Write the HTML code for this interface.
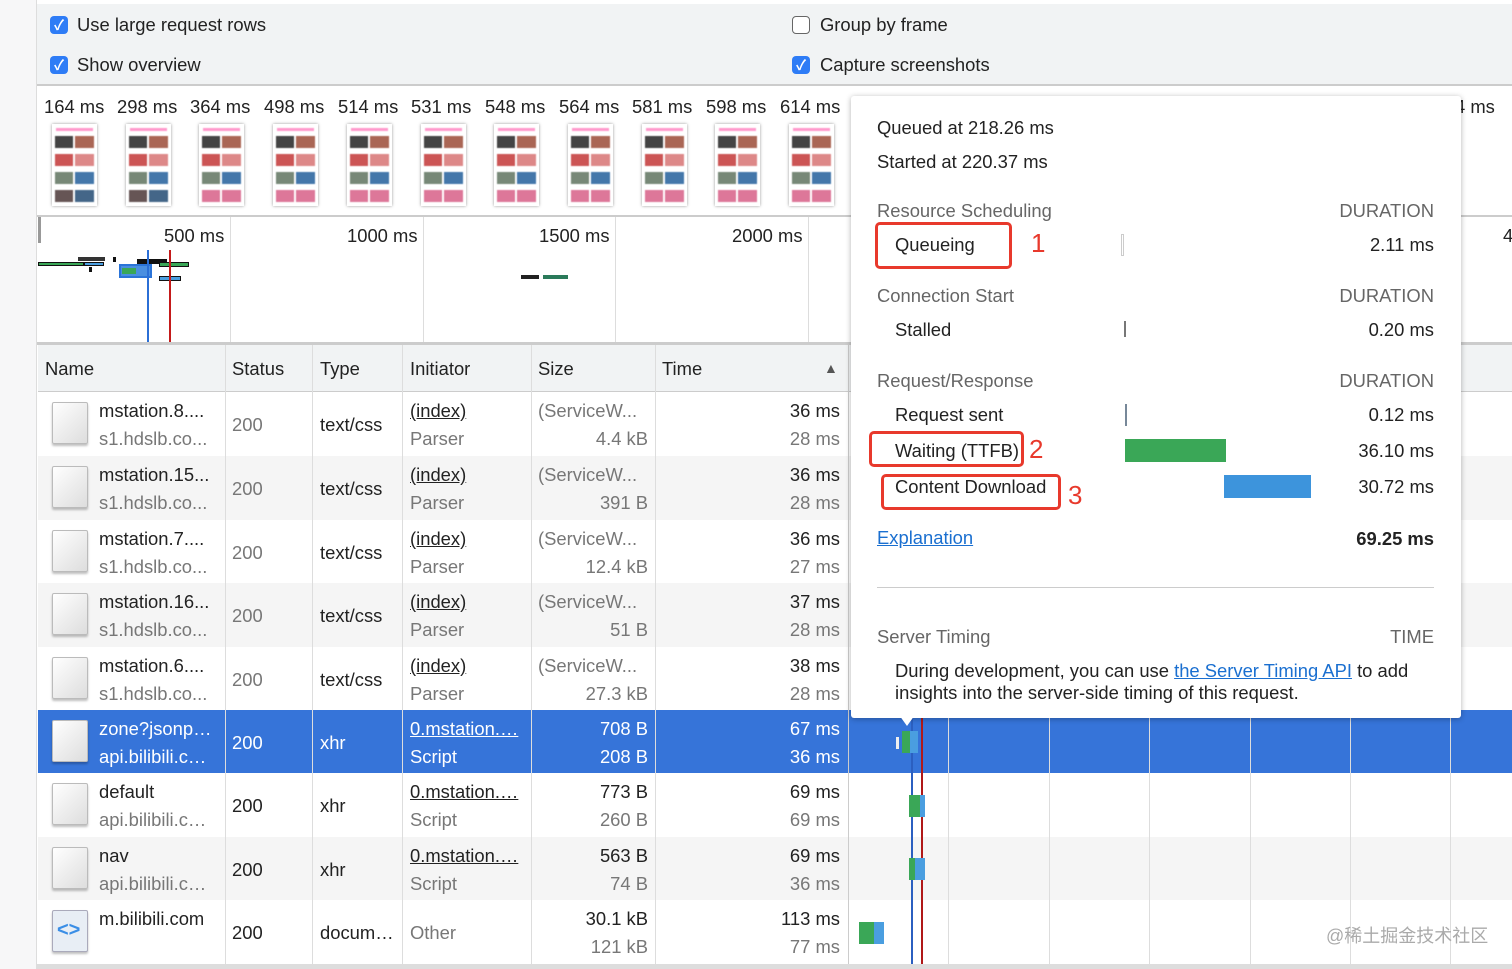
<!DOCTYPE html>
<html><head><meta charset="utf-8"><style>
*{margin:0;padding:0;box-sizing:border-box}
body{width:1512px;height:969px;overflow:hidden;background:#fff;font-family:"Liberation Sans","Noto Sans CJK SC",sans-serif;font-size:18.4px;color:#222;position:relative}
.a{position:absolute;white-space:nowrap}
.cb{position:absolute;width:18px;height:18px;border-radius:4px;background:#2e7cf6;color:#fff;font-size:14px;font-weight:bold;line-height:18px;text-align:center}
.cbo{position:absolute;width:18px;height:18px;border-radius:4px;border:1.5px solid #666;background:#fff}
.th{position:absolute;left:52px;top:124px;width:45px;height:82px;background:#fff;box-shadow:0 0 3px rgba(0,0,0,.4)}
.th i{position:absolute;display:block;filter:blur(.4px)}
.row{position:absolute;left:38px;width:1474px;height:64px}
.ic{position:absolute;left:14px;top:10px;width:36px;height:42px;border:1px solid #bbb;border-radius:2px;background:linear-gradient(135deg,#fff,#ddd);box-shadow:0 2px 2px rgba(0,0,0,.25)}
.u{text-decoration:underline}
.vl{position:absolute;top:392px;height:577px;width:1px;background:#ddd}
.tip{position:absolute;left:851px;top:96px;width:610px;height:622px;background:#fff;box-shadow:0 1px 6px rgba(0,0,0,.3);border-radius:3px}
.sec{color:#666}
.red{position:absolute;border:3px solid #e8392c;border-radius:5px}
.num{position:absolute;color:#e8392c;font-size:26px}
</style></head><body>
<div class="a" style="left:0;top:0;width:37px;height:969px;background:#f7f7f8;border-right:1px solid #ddd"></div>
<div class="a" style="left:37px;top:0;width:1475px;height:86px;background:#f1f3f4;border-top:4px solid #fff;border-bottom:2px solid #ccc"></div>
<div class="cb" style="left:50px;top:16px">✓</div><div class="a" style="left:77px;top:14px">Use large request rows</div>
<div class="cb" style="left:50px;top:56px">✓</div><div class="a" style="left:77px;top:54px">Show overview</div>
<div class="cbo" style="left:792px;top:16px"></div><div class="a" style="left:820px;top:14px">Group by frame</div>
<div class="cb" style="left:792px;top:56px">✓</div><div class="a" style="left:820px;top:54px">Capture screenshots</div>

<div class="a" style="left:44px;top:96px">164 ms</div>
<div class="a" style="left:117px;top:96px">298 ms</div>
<div class="a" style="left:190px;top:96px">364 ms</div>
<div class="a" style="left:264px;top:96px">498 ms</div>
<div class="a" style="left:338px;top:96px">514 ms</div>
<div class="a" style="left:411px;top:96px">531 ms</div>
<div class="a" style="left:485px;top:96px">548 ms</div>
<div class="a" style="left:559px;top:96px">564 ms</div>
<div class="a" style="left:632px;top:96px">581 ms</div>
<div class="a" style="left:706px;top:96px">598 ms</div>
<div class="a" style="left:780px;top:96px">614 ms</div>
<div class="a" style="left:1455px;top:96px">4 ms</div>
<div id="thumbs"></div>
<div class="a" style="left:37px;top:215px;width:1475px;height:2px;background:#ccc"></div>
<div class="a" style="left:38px;top:217px;width:3px;height:26px;background:#999"></div>
<div class="a" style="left:230px;top:217px;width:1px;height:125px;background:#ddd"></div>
<div class="a" style="left:423px;top:217px;width:1px;height:125px;background:#ddd"></div>
<div class="a" style="left:615px;top:217px;width:1px;height:125px;background:#ddd"></div>
<div class="a" style="left:808px;top:217px;width:1px;height:125px;background:#ddd"></div>
<div class="a" style="left:164px;top:225px">500 ms</div>
<div class="a" style="left:347px;top:225px">1000 ms</div>
<div class="a" style="left:539px;top:225px">1500 ms</div>
<div class="a" style="left:732px;top:225px">2000 ms</div>
<div class="a" style="left:1503px;top:225px">4</div>
<div class="a" style="left:38px;top:262px;width:46px;height:4px;background:#3aa757;border:1px solid #111"></div>
<div class="a" style="left:84px;top:262px;width:20px;height:4px;background:#4a9ee0;border:1px solid #111"></div>
<div class="a" style="left:78px;top:257px;width:27px;height:4px;background:#333"></div>
<div class="a" style="left:89px;top:267px;width:3px;height:5px;background:#111"></div>
<div class="a" style="left:113px;top:257px;width:3px;height:5px;background:#111"></div>
<div class="a" style="left:119px;top:264px;width:33px;height:14px;background:#4a8fe0;border:2px solid #2b74d8"></div>
<div class="a" style="left:122px;top:268px;width:14px;height:6px;background:#3aa757"></div>
<div class="a" style="left:137px;top:259px;width:30px;height:5px;background:#111"></div>
<div class="a" style="left:159px;top:262px;width:30px;height:5px;background:#3aa757;border:1px solid #111"></div>
<div class="a" style="left:159px;top:276px;width:22px;height:5px;background:#4a9ee0;border:1px solid #111"></div>
<div class="a" style="left:147px;top:250px;width:2px;height:92px;background:#2b6fd6"></div>
<div class="a" style="left:169px;top:250px;width:2px;height:92px;background:#c41a1a"></div>
<div class="a" style="left:521px;top:275px;width:18px;height:4px;background:#222"></div>
<div class="a" style="left:543px;top:275px;width:25px;height:4px;background:#2a7a5a"></div>
<div class="a" style="left:37px;top:342px;width:1475px;height:3px;background:#ccc"></div>

<div class="a" style="left:38px;top:345px;width:1474px;height:47px;background:#f1f3f4;border-bottom:1px solid #ccc"></div>
<div class="a" style="left:45px;top:358px">Name</div>
<div class="a" style="left:232px;top:358px">Status</div>
<div class="a" style="left:320px;top:358px">Type</div>
<div class="a" style="left:410px;top:358px">Initiator</div>
<div class="a" style="left:538px;top:358px">Size</div>
<div class="a" style="left:662px;top:358px">Time</div>
<div class="a" style="left:824px;top:360px;font-size:14px;color:#555">▲</div>
<div id="rows"></div>
<div class="vl" style="left:225px;top:345px;height:624px"></div>
<div class="vl" style="left:312px;top:345px;height:624px"></div>
<div class="vl" style="left:402px;top:345px;height:624px"></div>
<div class="vl" style="left:531px;top:345px;height:624px"></div>
<div class="vl" style="left:655px;top:345px;height:624px"></div>
<div class="vl" style="left:848px;top:345px;height:624px;background:#ccc"></div>
<div class="vl" style="left:948px"></div><div class="vl" style="left:1049px"></div><div class="vl" style="left:1149px"></div><div class="vl" style="left:1250px"></div><div class="vl" style="left:1350px"></div><div class="vl" style="left:1450px"></div>
<div class="a" style="left:911px;top:718px;width:2px;height:251px;background:#2b5fc0"></div>
<div class="a" style="left:921px;top:718px;width:2px;height:251px;background:#b01818"></div>
<div class="a" style="left:896px;top:737px;width:3px;height:12px;background:#eee"></div>
<div class="a" style="left:902px;top:731px;width:8px;height:22px;background:#3aa757"></div>
<div class="a" style="left:910px;top:731px;width:8px;height:22px;background:#4a9ee0"></div>
<div class="a" style="left:909px;top:795px;width:14px;height:22px;background:#3aa757"></div>
<div class="a" style="left:920px;top:795px;width:5px;height:22px;background:#4a9ee0"></div>
<div class="a" style="left:909px;top:858px;width:8px;height:22px;background:#3aa757"></div>
<div class="a" style="left:915px;top:858px;width:10px;height:22px;background:#4a9ee0"></div>
<div class="a" style="left:859px;top:922px;width:15px;height:22px;background:#3aa757"></div>
<div class="a" style="left:874px;top:922px;width:10px;height:22px;background:#4a9ee0"></div>
<div class="a" style="left:1326px;top:922px;color:#aaa;font-size:18px">@稀土掘金技术社区</div>
<div class="a" style="left:37px;top:964px;width:1475px;height:5px;background:#ddd"></div>

<div class="tip"></div>
<div class="a" style="left:897px;top:712px;width:0;height:0;border-left:10px solid transparent;border-right:10px solid transparent;border-top:14px solid #fff"></div>
<div class="a" style="left:877px;top:117px">Queued at 218.26 ms</div>
<div class="a" style="left:877px;top:151px">Started at 220.37 ms</div>
<div class="a sec" style="left:877px;top:200px">Resource Scheduling</div><div class="a sec" style="right:78px;top:200px">DURATION</div>
<div class="a" style="left:895px;top:234px">Queueing</div><div class="a" style="right:78px;top:234px">2.11 ms</div>
<div class="a" style="left:1121px;top:234px;width:3px;height:22px;border:1px solid #ccc"></div>
<div class="a sec" style="left:877px;top:285px">Connection Start</div><div class="a sec" style="right:78px;top:285px">DURATION</div>
<div class="a" style="left:895px;top:319px">Stalled</div><div class="a" style="right:78px;top:319px">0.20 ms</div>
<div class="a" style="left:1124px;top:321px;width:2px;height:16px;background:#777"></div>
<div class="a sec" style="left:877px;top:370px">Request/Response</div><div class="a sec" style="right:78px;top:370px">DURATION</div>
<div class="a" style="left:895px;top:404px">Request sent</div><div class="a" style="right:78px;top:404px">0.12 ms</div>
<div class="a" style="left:1125px;top:404px;width:2px;height:22px;background:#789"></div>
<div class="a" style="left:895px;top:440px">Waiting (TTFB)</div><div class="a" style="right:78px;top:440px">36.10 ms</div>
<div class="a" style="left:1125px;top:439px;width:101px;height:23px;background:#3aa757"></div>
<div class="a" style="left:895px;top:476px">Content Download</div><div class="a" style="right:78px;top:476px">30.72 ms</div>
<div class="a" style="left:1224px;top:475px;width:87px;height:23px;background:#3d94dc"></div>
<div class="a u" style="left:877px;top:527px;color:#1a6fd0">Explanation</div>
<div class="a" style="right:78px;top:528px;font-weight:bold">69.25 ms</div>
<div class="a" style="left:877px;top:587px;width:557px;height:1px;background:#ccc"></div>
<div class="a sec" style="left:877px;top:626px">Server Timing</div><div class="a sec" style="right:78px;top:626px">TIME</div>
<div class="a" style="left:895px;top:660px">During development, you can use <span class="u" style="color:#1a6fd0">the Server Timing API</span> to add</div>
<div class="a" style="left:895px;top:682px">insights into the server-side timing of this request.</div>
<div class="red" style="left:875px;top:222px;width:137px;height:47px"></div>
<div class="num" style="left:1031px;top:228px">1</div>
<div class="red" style="left:869px;top:431px;width:155px;height:36px"></div>
<div class="num" style="left:1029px;top:434px">2</div>
<div class="red" style="left:881px;top:474px;width:180px;height:36px"></div>
<div class="num" style="left:1068px;top:480px">3</div>

<script>
var t='';
for(var i=0;i<11;i++){var x=52+i*73.7;
t+='<div class="th" style="left:'+x+'px"><i style="left:4px;top:4px;width:37px;height:3px;background:#f9c"></i><i style="left:3px;top:12px;width:18px;height:12px;background:#444"></i><i style="left:23px;top:12px;width:19px;height:12px;background:#a65"></i><i style="left:3px;top:30px;width:18px;height:12px;background:#c55"></i><i style="left:23px;top:30px;width:19px;height:12px;background:#d88"></i><i style="left:3px;top:48px;width:18px;height:12px;background:#787"></i><i style="left:23px;top:48px;width:19px;height:12px;background:#47a"></i><i style="left:3px;top:66px;width:18px;height:12px;background:'+(i>1?'#d79':'#655')+'"></i><i style="left:23px;top:66px;width:19px;height:12px;background:'+(i>1?'#d79':'#468')+'"></i></div>';}
document.getElementById('thumbs').innerHTML=t;
var R=[['mstation.8....','s1.hdslb.co...','text/css','(index)','Parser','(ServiceW...','4.4 kB','36 ms','28 ms'],
['mstation.15...','s1.hdslb.co...','text/css','(index)','Parser','(ServiceW...','391 B','36 ms','28 ms'],
['mstation.7....','s1.hdslb.co...','text/css','(index)','Parser','(ServiceW...','12.4 kB','36 ms','27 ms'],
['mstation.16...','s1.hdslb.co...','text/css','(index)','Parser','(ServiceW...','51 B','37 ms','28 ms'],
['mstation.6....','s1.hdslb.co...','text/css','(index)','Parser','(ServiceW...','27.3 kB','38 ms','28 ms'],
['zone?jsonp…','api.bilibili.c…','xhr','0.mstation.…','Script','708 B','208 B','67 ms','36 ms'],
['default','api.bilibili.c…','xhr','0.mstation.…','Script','773 B','260 B','69 ms','69 ms'],
['nav','api.bilibili.c…','xhr','0.mstation.…','Script','563 B','74 B','69 ms','36 ms'],
['m.bilibili.com','','docum…','','Other','30.1 kB','121 kB','113 ms','77 ms']];
var tops=[392,456,520,583,647,710,773,837,900],h='';
R.forEach(function(r,i){var y=tops[i],sel=i==5,bg=sel?'#3674d9':(i%2?'#f5f5f5':'#fff'),c=sel?'#fff':'#222',g=sel?'#fff':'#777';
h+='<div class="row" style="top:'+y+'px;background:'+bg+'"><div class="ic"'+(i==8?' style="background:#e8eef5;border-color:#aab"><span style="position:absolute;left:4px;top:8px;color:#3a8ee6;font-weight:bold;font-size:20px">&lt;&gt;</span></div>':'></div>')+'</div>';
h+='<div class="a" style="left:99px;top:'+(y+8)+'px;color:'+c+'">'+r[0]+'</div>';
h+='<div class="a" style="left:99px;top:'+(y+36)+'px;color:'+g+'">'+r[1]+'</div>';
h+='<div class="a" style="left:232px;top:'+(y+22)+'px;color:'+(sel||i>4?c:'#777')+'">200</div>';
h+='<div class="a" style="left:320px;top:'+(y+22)+'px;color:'+c+'">'+r[2]+'</div>';
if(r[3])h+='<div class="a u" style="left:410px;top:'+(y+8)+'px;color:'+c+'">'+r[3]+'</div>';
h+='<div class="a" style="left:410px;top:'+(y+(r[3]?36:22))+'px;color:'+g+'">'+r[4]+'</div>';
h+='<div class="a" style="right:'+(1512-648)+'px;top:'+(y+8)+'px;color:'+(i<5?g:c)+';'+(i<5?'left:538px;right:auto':'')+'">'+r[5]+'</div>';
h+='<div class="a" style="right:'+(1512-648)+'px;top:'+(y+36)+'px;color:'+g+'">'+r[6]+'</div>';
h+='<div class="a" style="right:'+(1512-840)+'px;top:'+(y+8)+'px;color:'+c+'">'+r[7]+'</div>';
h+='<div class="a" style="right:'+(1512-840)+'px;top:'+(y+36)+'px;color:'+g+'">'+r[8]+'</div>';});
document.getElementById('rows').innerHTML=h;
</script>
</body></html>
